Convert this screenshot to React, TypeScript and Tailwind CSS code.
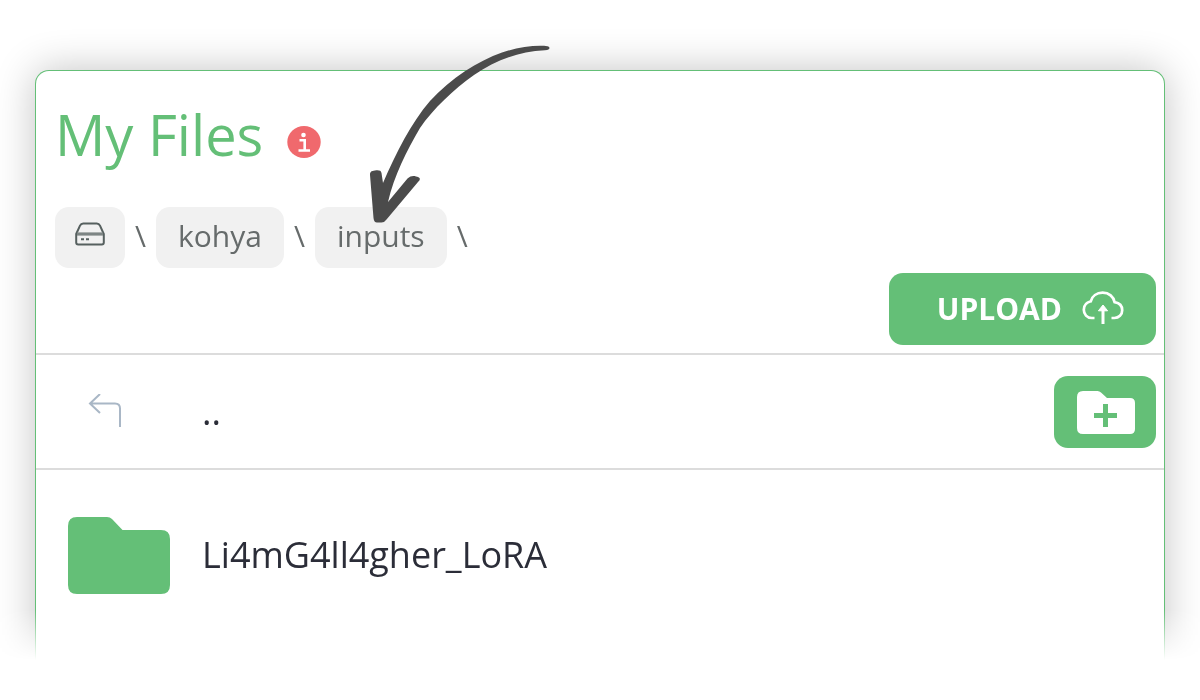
import type { ReactNode } from "react";

function InfoIcon() {
  return (
    <svg viewBox="0 0 34 32" className="h-8 w-[34px]" aria-hidden="true">
      <ellipse cx="17" cy="16" rx="16.7" ry="16" fill="#f0696d" />
      <circle cx="16.5" cy="9" r="2.3" fill="#fff" />
      <path d="M12.5 14.2H17.7V24M11.5 24.5H23" fill="none" stroke="#fff" strokeWidth="2.6" />
    </svg>
  );
}

function DriveIcon() {
  return (
    <svg viewBox="0 0 30 24" className="h-6 w-[30px]" fill="none" aria-hidden="true">
      <path
        d="M1.2 12L5 3.6Q6 1.4 8.2 1.4H21.8Q24 1.4 25 3.6L28.8 12V20.6Q28.8 22.6 26.8 22.6H3.2Q1.2 22.6 1.2 20.6Z"
        stroke="#56605f"
        strokeWidth="2"
      />
      <path d="M2 12H28" stroke="#7d8584" strokeWidth="3.2" />
      <path d="M6 17.3H9M11 17.3H14" stroke="#56605f" strokeWidth="2" />
    </svg>
  );
}

function CloudUploadIcon() {
  return (
    <svg viewBox="0 0 42 34" className="h-[34px] w-[42px]" fill="none" stroke="#fff" aria-hidden="true">
      <path
        d="M12.5 27H9.8C5 27 1.8 23.3 1.8 18.8C1.8 14.5 4.5 11.4 8.8 10.3C10 5 14.8 1.7 20.6 1.7C27 1.7 31.6 5.6 32.6 11.2C37 12 40.2 14.8 40.2 19.2C40.2 23.8 36.8 27 32.4 27H29.5"
        strokeWidth="2.7"
      />
      <path d="M21 33V18" strokeWidth="3" />
      <path d="M21 14L25.6 19.8H16.4Z" fill="#fff" strokeWidth="1" strokeLinejoin="round" />
    </svg>
  );
}

function NewFolderIcon() {
  return (
    <svg viewBox="0 0 58 43" className="h-[43px] w-[58px]" aria-hidden="true">
      <path
        d="M6 0H20.5Q22.5 0 24 1.5L30 7H53Q58 7 58 12V38Q58 43 53 43H6Q0 43 0 37V6Q0 0 6 0Z"
        fill="#fff"
      />
      <path d="M28.5 13V36M17 24.5H40" stroke="#64bf77" strokeWidth="5" />
    </svg>
  );
}

function BackIcon() {
  return (
    <svg
      viewBox="0 0 34 36"
      className="h-9 w-[34px]"
      fill="none"
      stroke="#a9b7c6"
      strokeWidth="2"
      aria-hidden="true"
    >
      <path d="M12 0L2 9.5L12 19M2 9.5H27Q32 9.5 32 14.5V33" />
    </svg>
  );
}

function FolderIcon() {
  return (
    <svg viewBox="0 0 102 77" className="h-[77px] w-[102px]" aria-hidden="true">
      <path
        d="M9 0H39Q42 0 44 2L54.5 13H93Q102 13 102 22V68Q102 77 93 77H9Q0 77 0 68V9Q0 0 9 0Z"
        fill="#64bf77"
      />
    </svg>
  );
}

// Hand drawn arrow that points at the current folder
function PointerArrow() {
  return (
    <svg
      viewBox="0 0 182 180"
      className="pointer-events-none absolute top-11 left-[369px] h-[180px] w-[182px]"
      fill="#4b4b4b"
      aria-hidden="true"
    >
      <path d="M178.5 2.2C166 0.8 148 3.5 133 8.5C109 17 82 34 61 57C42 79 27 109 14 139L12.5 129C12 126.5 10 126 6 126.5C2 127 1 128 1 131L4.5 174Q5 178.5 8 178.5H12.5Q15.5 178.5 17.5 175.5L49 138Q52.5 134.5 49.5 133.3C46 131.5 42 131 38.5 134.5L19 158C25 132 38 106 51 84C64 65 85 45 105 31C126 17 149 7.5 176 6.2C181.5 6.2 181.5 2.7 178.5 2.2Z" />
    </svg>
  );
}

function Crumb({ label, children }: { label?: string; children: ReactNode }) {
  return (
    <li className="flex items-start gap-[10px]">
      <a
        href="#"
        aria-label={label}
        className="flex h-[61px] items-center rounded-[14px] bg-[#f1f1f1] px-[22px] pb-1"
      >
        {children}
      </a>
      <span className="pt-2">\</span>
    </li>
  );
}

export default function App() {
  return (
    <div className="relative bg-white font-['Open_Sans',sans-serif]">
      <div className="overflow-hidden px-[35px] pt-[70px] [mask-image:linear-gradient(to_bottom,black_610px,transparent_660px)]">
        <main className="rounded-t-[14px] border border-b-0 border-[#64bf77] bg-white pb-14 shadow-[0_0_40px_rgba(0,0,0,0.24)]">
          <header className="border-b-2 border-[#dcdcdc] pt-[25px] pr-2 pb-2 pl-[19px]">
            <div className="flex items-center gap-6">
              <h1 className="text-[56px] leading-[76px] text-[#64bf77]">My Files</h1>
              <button type="button" aria-label="About my files" className="mt-4">
                <InfoIcon />
              </button>
            </div>

            <nav aria-label="Folder path" className="mt-[35px]">
              <ol className="flex gap-[10px] text-[30px] leading-[41px] text-[#666b6b]">
                <Crumb label="Drive">
                  <span className="-mx-0.5 pb-1">
                    <DriveIcon />
                  </span>
                </Crumb>
                <Crumb>kohya</Crumb>
                <Crumb>inputs</Crumb>
              </ol>
            </nav>

            <div className="mt-[5px] flex justify-end">
              <button
                type="button"
                className="flex h-[72px] items-center gap-5 rounded-[14px] bg-[#64bf77] pr-8 pb-0.5 pl-12 text-[30px] leading-[41px] font-bold text-white"
              >
                UPLOAD
                <CloudUploadIcon />
              </button>
            </div>
          </header>

          <ul className="text-[36px] leading-[50px] text-[#2b2d38]">
            <li className="flex h-[115px] items-center border-b-2 border-[#dcdcdc] pr-2 pl-8">
              <a href="#" className="flex items-center gap-8">
                <span className="flex w-[102px] pl-5">
                  <BackIcon />
                </span>
                ..
              </a>
              <button
                type="button"
                aria-label="New folder"
                className="ml-auto flex h-[72px] w-[102px] items-center justify-center rounded-[14px] bg-[#64bf77] pt-0.5 pl-0.5"
              >
                <NewFolderIcon />
              </button>
            </li>
            <li className="flex h-[170px] items-center pr-2 pl-8">
              <a href="#" className="flex items-center gap-8">
                <FolderIcon />
                Li4mG4ll4gher_LoRA
              </a>
            </li>
          </ul>
        </main>
      </div>
      <PointerArrow />
    </div>
  );
}
